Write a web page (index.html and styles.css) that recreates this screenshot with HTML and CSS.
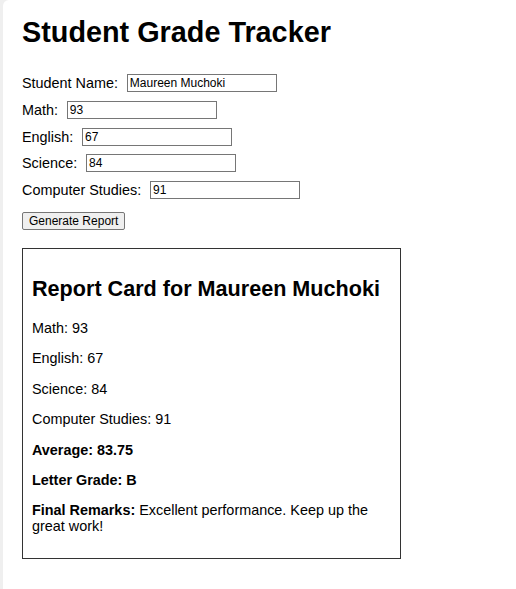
FILE: index.html
```html
<!DOCTYPE html>
<html lang="en">
<head>
<meta charset="utf-8">
<title>Student Grade Tracker</title>
<link rel="stylesheet" href="styles.css">
</head>
<body>
<div class="page">
  <h1 class="title">Student Grade Tracker</h1>
  <form class="form">
    <div class="row"><label class="label" for="name">Student Name:</label><input class="field" id="name" type="text" value="Maureen Muchoki"></div>
    <div class="row"><label class="label" for="math">Math:</label><input class="field" id="math" type="text" value="93"></div>
    <div class="row"><label class="label" for="english">English:</label><input class="field" id="english" type="text" value="67"></div>
    <div class="row"><label class="label" for="science">Science:</label><input class="field" id="science" type="text" value="84"></div>
    <div class="row"><label class="label" for="cs">Computer Studies:</label><input class="field" id="cs" type="text" value="91"></div>
    <button class="btn" type="button">Generate Report</button>
  </form>
  <div class="report">
    <h2 class="report-title">Report Card for Maureen Muchoki</h2>
    <p class="line">Math: 93</p>
    <p class="line">English: 67</p>
    <p class="line">Science: 84</p>
    <p class="line">Computer Studies: 91</p>
    <p class="line"><strong>Average: 83.75</strong></p>
    <p class="line"><strong>Letter Grade: B</strong></p>
    <p class="line"><strong>Final Remarks:</strong> Excellent performance. Keep up the great work!</p>
  </div>
</div>
</body>
</html>
```
FILE: styles.css
```css
html, body {
  margin: 0;
  padding: 0;
}
body {
  background: #efefef;
  font-family: "Liberation Sans", Arial, sans-serif;
  color: #000;
}
.page {
  margin-left: 3px;
  background: #fff;
  border-top-left-radius: 6px;
  min-height: 100vh;
  box-sizing: border-box;
  padding: 16px 19px 20px;
}
.title {
  margin: 0;
  font-size: 28.8px;
  font-weight: bold;
  line-height: normal;
}
.form {
  margin-top: 25px;
}
.row {
  display: flex;
  align-items: center;
  height: 18px;
  margin-bottom: 8.8px;
}
.label {
  font-size: 14.4px;
  margin-right: 8.8px;
}
.field {
  box-sizing: border-box;
  width: 150px;
  height: 18px;
  margin: 0;
  padding: 1px 2px;
  border: 1px solid #767676;
  font-family: "Liberation Sans", Arial, sans-serif;
  font-size: 12px;
  color: #000;
  background: #fff;
}
.btn {
  display: block;
  margin-top: 13px;
  height: 18px;
  padding: 0 6px;
  border: 1px solid #767676;
  border-radius: 2px;
  background: #efefef;
  font-family: "Liberation Sans", Arial, sans-serif;
  font-size: 12px;
  color: #000;
}
.report {
  margin-top: 18px;
  width: 359px;
  padding: 9px 9px 9px 9px;
  border: 1px solid #333;
}
.report-title {
  margin: 17.9px 0;
  font-size: 21.6px;
  font-weight: bold;
  line-height: normal;
}
.line {
  margin: 14.4px 0;
  font-size: 14.4px;
  line-height: normal;
}
```
